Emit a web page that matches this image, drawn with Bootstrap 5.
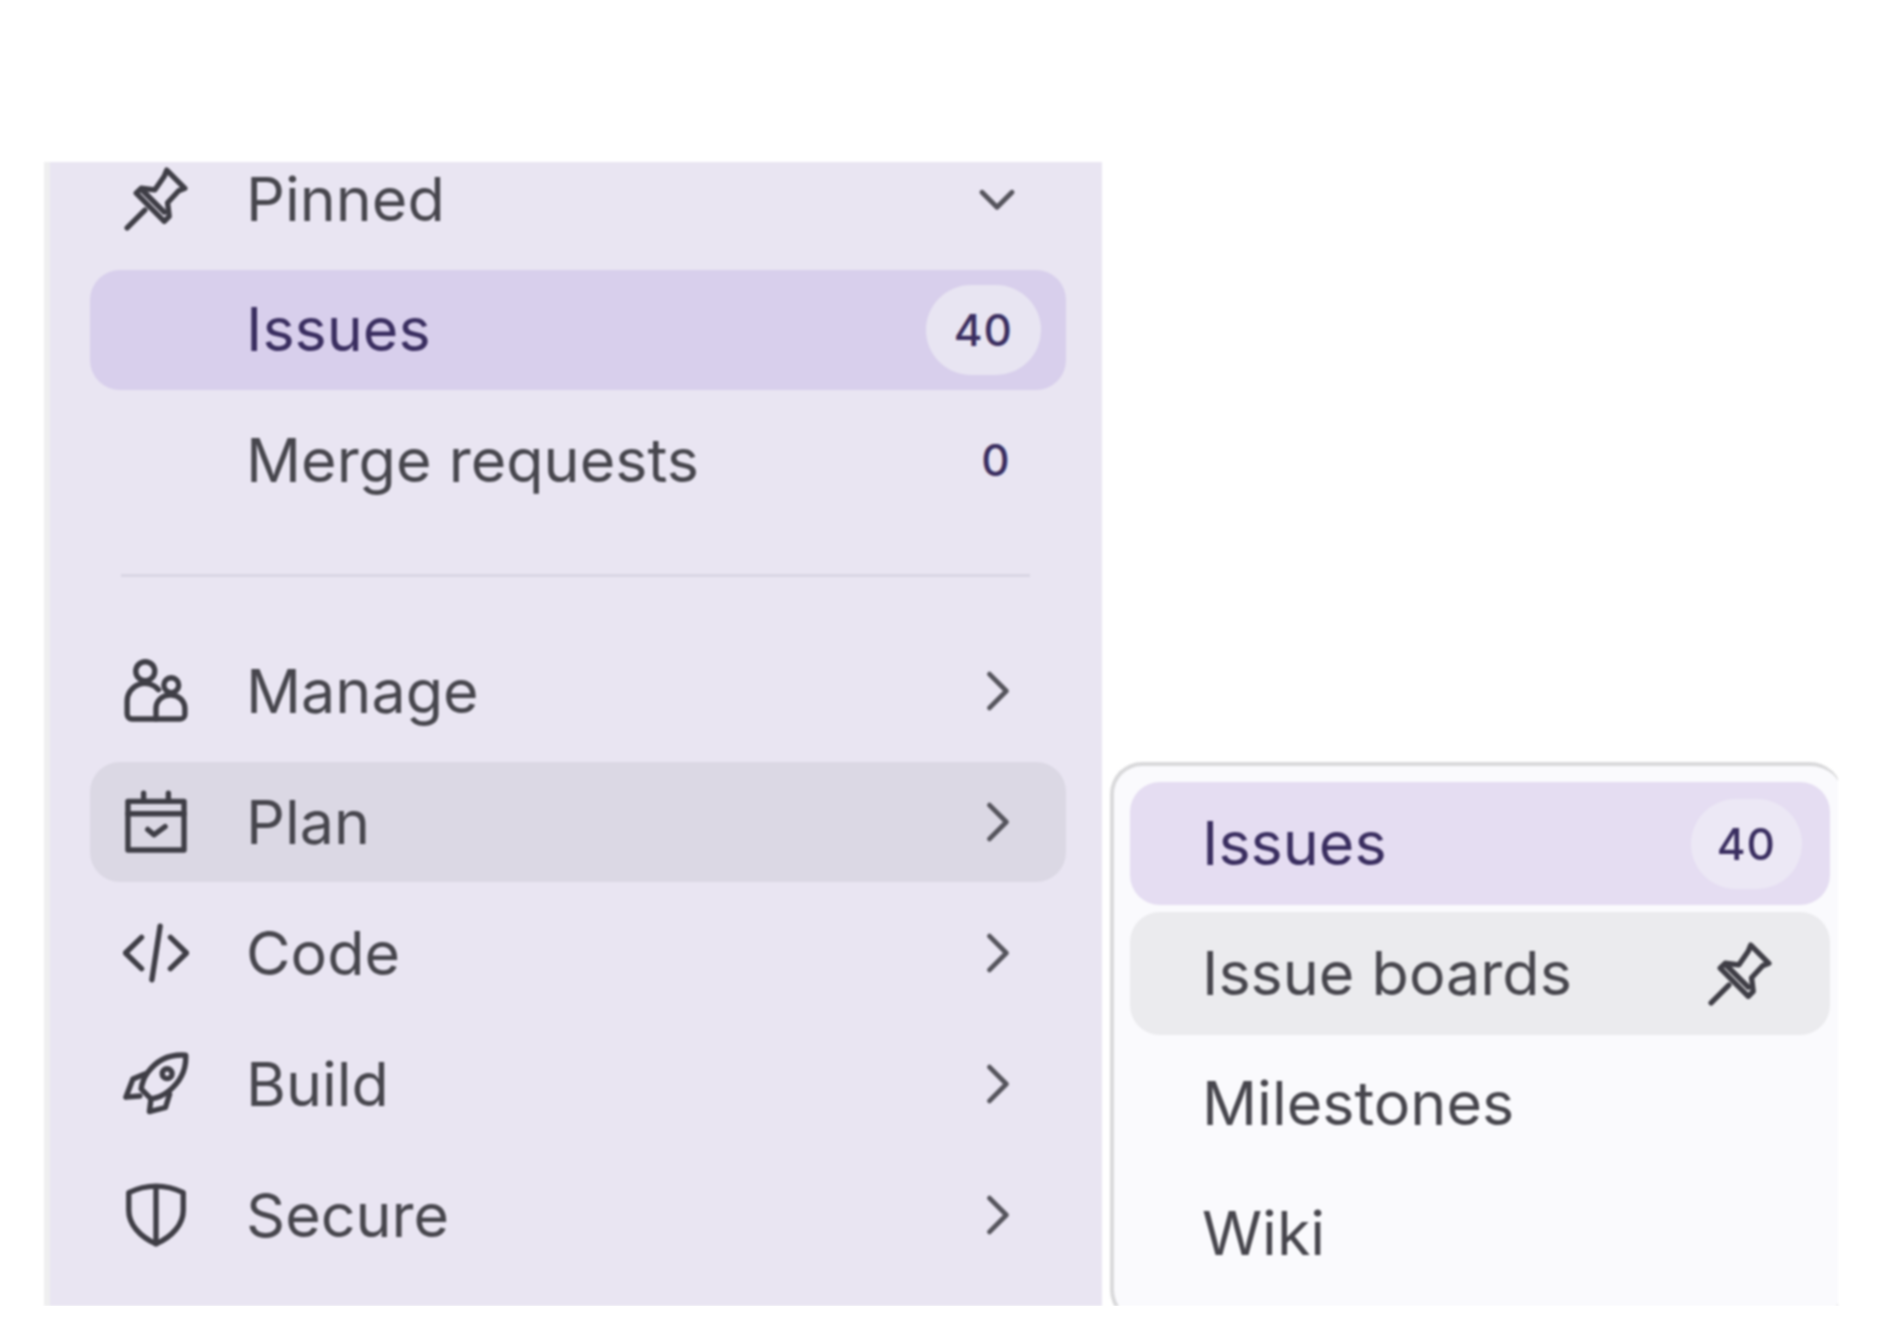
<!DOCTYPE html>
<html lang="en">
<head>
    <meta charset="UTF-8" />
    <title>Plan menu</title>
    <link href="https://cdn.jsdelivr.net/npm/bootstrap@5.3.3/dist/css/bootstrap.min.css" rel="stylesheet">
    <style>
        body {
            background: #fff;
            font-family: Inter, "Liberation Sans", sans-serif;
        }

        .stage {
            width: 1794px;
            height: 1144px;
            margin: 162px 0 0 44px;
            filter: blur(1px);
        }

        .side-panel {
            width: 1058px;
            height: 100%;
            flex: none;
            background: #e9e5f2;
            border-left: 6px solid #efeff0;
            padding: 0 36px 0 40px;
        }

        .menu-list {
            gap: 11px;
            margin: 0;
            padding: 0;
            list-style: none;
        }

        .pinned-list {
            gap: 10.5px;
            margin-top: -23px;
        }

        .menu-row {
            height: 120px;
            padding: 0 25px 0 33px;
            border-radius: 30px;
            color: #47464d;
            font-size: 61px;
        }

        .menu-row svg {
            width: 66px;
            height: 66px;
            flex: none;
            fill: none;
            stroke: #3f3e46;
            stroke-width: 1.3;
            stroke-linecap: round;
            stroke-linejoin: round;
        }

        .row-label {
            margin-left: 57px;
            flex-grow: 1;
            line-height: 1;
        }

        .row-active {
            background: #d8cfec;
            color: #3a2e60;
        }

        .row-hover {
            background: #dbd8e4;
        }

        .count-pill {
            min-width: 90px;
            height: 90px;
            padding: 0 28px;
            border-radius: 45px;
            color: #3a2e60;
            font-size: 44px;
            font-weight: 500;
            letter-spacing: 1px;
        }

        .row-active .count-pill {
            background: #e8e5f2;
        }

        .menu-row .chevron-slot {
            width: 60px;
            height: 60px;
            margin-right: 14px;
            stroke: #55545c;
        }

        .side-rule {
            height: 3px;
            margin: 54px 36px 54px 31px;
            background: #d9d6e4;
        }

        .fly-panel {
            width: 732px;
            height: 560px;
            flex: none;
            margin: 600px 0 0 8px;
            padding: 16px 12px 0 16px;
            background: #fafafd;
            border: 4px solid #d9d9db;
            border-right: 0;
            border-radius: 32px;
            overflow: hidden;
        }

        .fly-panel .menu-list {
            gap: 7px;
        }

        .fly-panel .menu-row {
            height: 123px;
            padding: 0 28px 0 72px;
        }

        .fly-panel .row-label {
            margin-left: 0;
        }

        .fly-panel .row-active {
            background: #e5ddf2;
        }

        .fly-panel .row-active .count-pill {
            background: #ece8f5;
            padding: 0 26px;
        }

        .fly-panel .row-hover {
            background: #ebebee;
        }

        .menu-row .fly-pin {
            margin-right: 29px;
        }
    </style>
</head>
<body>
    <div class="stage d-flex overflow-hidden">
        <nav class="side-panel">
            <ul class="menu-list pinned-list d-flex flex-column">
                <li class="menu-row d-flex align-items-center">
                    <svg viewBox="0 0 16 16"><path d="M10.6 1 15 5.4l-1.5.6-2.7 2.9.4 3.3-1.2 1.2-6.8-6.8 1.2-1.2 3.3.4L10 2.5z"/><path d="M5.3 10.7 1 15M4.8 6l5.2 5.2"/></svg>
                    <span class="row-label">Pinned</span>
                    <svg class="chevron-slot" viewBox="0 0 16 16"><path d="M4 6.2 8 10.2 12 6.2"/></svg>
                </li>
                <li class="menu-row row-active d-flex align-items-center">
                    <svg viewBox="0 0 16 16"></svg>
                    <span class="row-label">Issues</span>
                    <span class="count-pill d-flex align-items-center justify-content-center">40</span>
                </li>
                <li class="menu-row d-flex align-items-center">
                    <svg viewBox="0 0 16 16"></svg>
                    <span class="row-label">Merge requests</span>
                    <span class="count-pill d-flex align-items-center justify-content-center">0</span>
                </li>
            </ul>
            <div class="side-rule"></div>
            <ul class="menu-list d-flex flex-column">
                <li class="menu-row d-flex align-items-center">
                    <svg viewBox="0 0 16 16"><circle cx="5.4" cy="3.2" r="2.3"/><circle cx="11.7" cy="6.6" r="1.8"/><path d="M8 14.8H2.2A1.2 1.2 0 0 1 1 13.6v-3.1a4.3 4.3 0 0 1 7.6-2.8"/><path d="M8 14.8v-2.6a3.3 3.3 0 0 1 3.6-3.2 3.3 3.3 0 0 1 3.4 3.2v1.5a1.1 1.1 0 0 1-1.1 1.1z"/></svg>
                    <span class="row-label">Manage</span>
                    <svg class="chevron-slot" viewBox="0 0 16 16"><path d="M6 3.5 10.5 8 6 12.5"/></svg>
                </li>
                <li class="menu-row row-hover d-flex align-items-center">
                    <svg viewBox="0 0 16 16"><rect x="1.2" y="3" width="13.6" height="11.8"/><path d="M1.2 6h13.6M5 1v2M11 1v2M6 9.8l1.5 1.3 2.7-2"/></svg>
                    <span class="row-label">Plan</span>
                    <svg class="chevron-slot" viewBox="0 0 16 16"><path d="M6 3.5 10.5 8 6 12.5"/></svg>
                </li>
                <li class="menu-row d-flex align-items-center">
                    <svg viewBox="0 0 16 16"><path d="M4.5 4.2.6 8l3.9 3.8M11.5 4.2 15.4 8l-3.9 3.8M9 1.5 7 14.5"/></svg>
                    <span class="row-label">Code</span>
                    <svg class="chevron-slot" viewBox="0 0 16 16"><path d="M6 3.5 10.5 8 6 12.5"/></svg>
                </li>
                <li class="menu-row d-flex align-items-center">
                    <svg viewBox="0 0 16 16"><path d="M15.2 1c-4-.3-7 1.2-9.2 4.2-1 1.4-1.4 2.6-1.6 4l2.4 2.4c1.5-.2 2.8-.7 4.2-1.8C13.8 7.6 15.4 5 15.2 1z"/><circle cx="10.7" cy="5.5" r="1.2"/><path d="M5.3 5.6 2.4 6.8.7 11.2l3.4-.3M6.8 11.6l-.4 3.1 3.9-1 1-3.2"/></svg>
                    <span class="row-label">Build</span>
                    <svg class="chevron-slot" viewBox="0 0 16 16"><path d="M6 3.5 10.5 8 6 12.5"/></svg>
                </li>
                <li class="menu-row d-flex align-items-center">
                    <svg viewBox="0 0 16 16"><path d="M8 1c2.2 0 4.6.6 6.6 1.6v4.3c0 3.3-2.6 6.3-6.6 8.1-4-1.8-6.6-4.8-6.6-8.1V2.6C3.4 1.6 5.8 1 8 1zM8 1v14"/></svg>
                    <span class="row-label">Secure</span>
                    <svg class="chevron-slot" viewBox="0 0 16 16"><path d="M6 3.5 10.5 8 6 12.5"/></svg>
                </li>
            </ul>
        </nav>

        <div class="fly-panel">
            <ul class="menu-list d-flex flex-column">
                <li class="menu-row row-active d-flex align-items-center">
                    <span class="row-label">Issues</span>
                    <span class="count-pill d-flex align-items-center justify-content-center">40</span>
                </li>
                <li class="menu-row row-hover d-flex align-items-center">
                    <span class="row-label">Issue boards</span>
                    <svg class="fly-pin" viewBox="0 0 16 16"><path d="M10.6 1 15 5.4l-1.5.6-2.7 2.9.4 3.3-1.2 1.2-6.8-6.8 1.2-1.2 3.3.4L10 2.5z"/><path d="M5.3 10.7 1 15M4.8 6l5.2 5.2"/></svg>
                </li>
                <li class="menu-row d-flex align-items-center">
                    <span class="row-label">Milestones</span>
                </li>
                <li class="menu-row d-flex align-items-center">
                    <span class="row-label">Wiki</span>
                </li>
            </ul>
        </div>
    </div>

    <script src="https://cdn.jsdelivr.net/npm/bootstrap@5.3.3/dist/js/bootstrap.bundle.min.js"></script>
</body>
</html>
